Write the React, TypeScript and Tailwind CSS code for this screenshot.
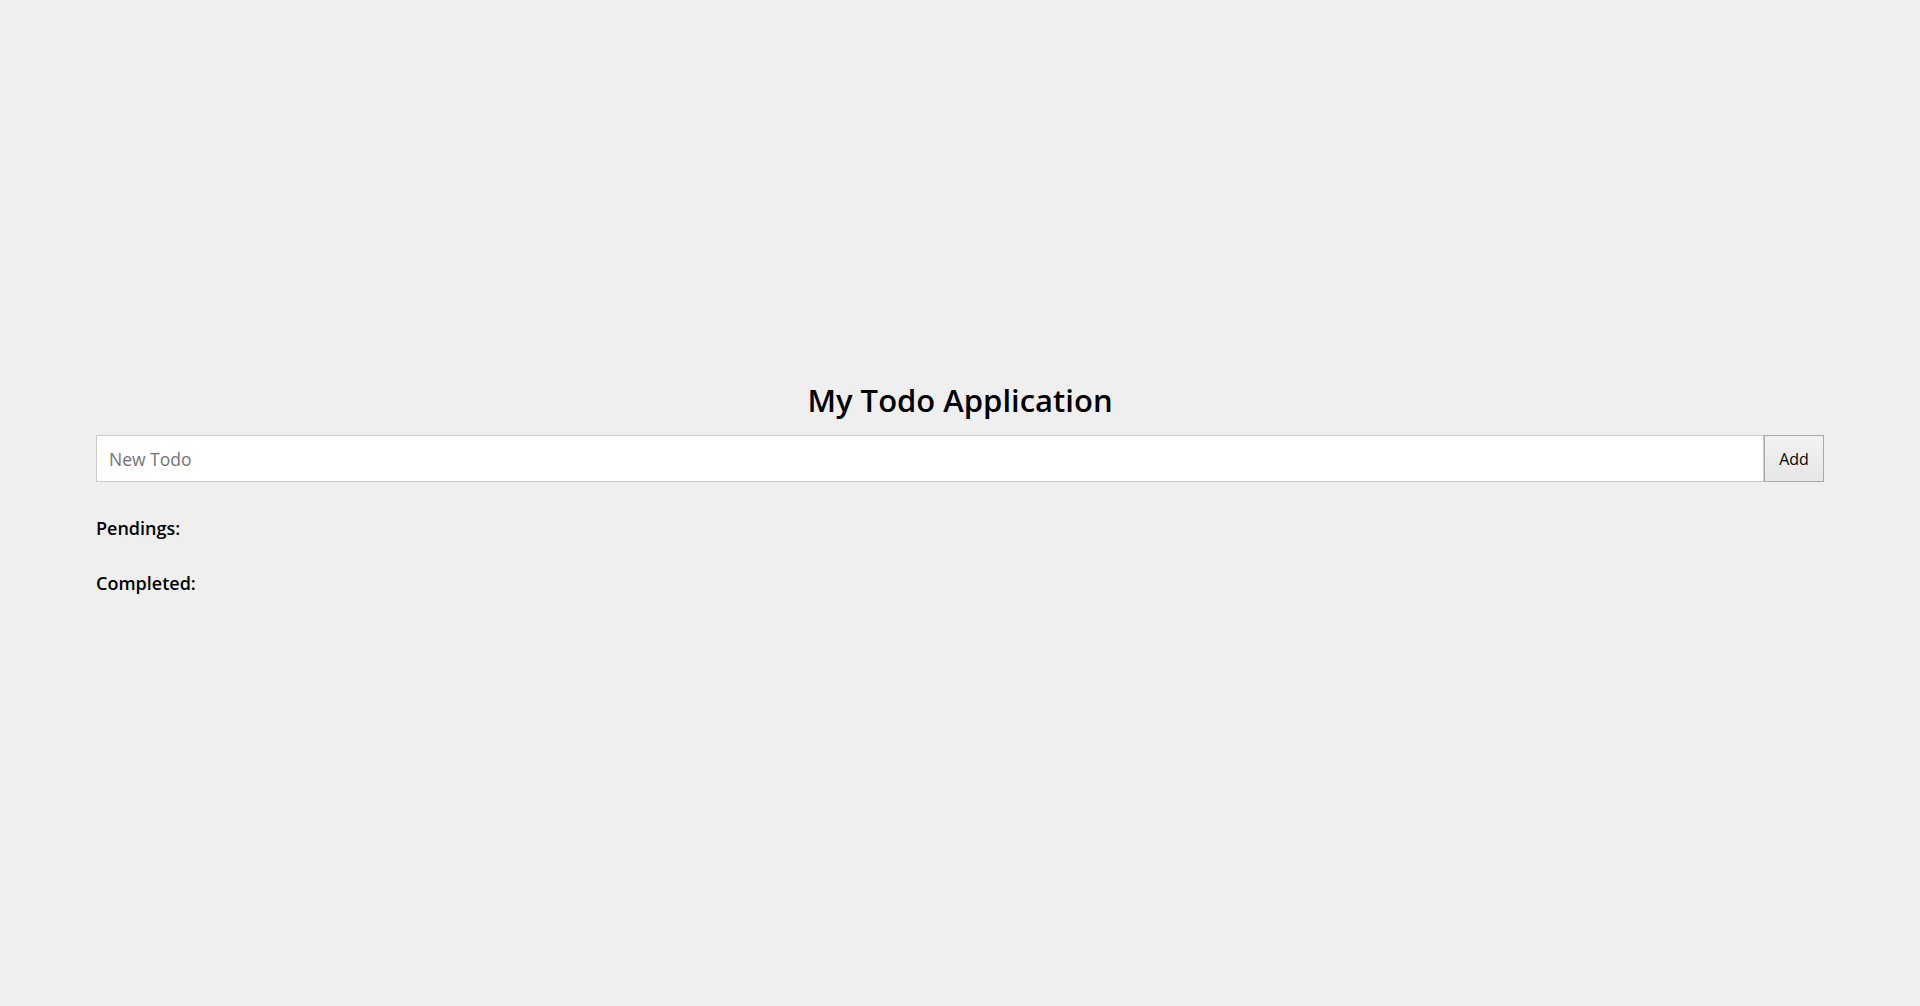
import React from "react";

export default function App() {
  return (
    <div className="min-h-[1006px] w-full bg-[#efefef] font-['Open_Sans',sans-serif] text-black">
      <div className="mx-auto w-[90%] pt-[382px]">
        <h1 className="text-center text-[31px] font-semibold leading-[36px]">My Todo Application</h1>
        <div className="mt-[17px] flex h-[47px]">
          <input
            type="text"
            placeholder="New Todo"
            className="h-full flex-1 border border-[#cccccc] bg-white px-[12px] text-[17.5px] text-black outline-none placeholder:text-[#757575]"
          />
          <button className="h-full w-[60px] border border-[#a9a9a9] bg-gradient-to-b from-[#f2f2f2] to-[#e6e6e6] text-[16px] text-black">
            Add
          </button>
        </div>
        <div className="mt-[34px] text-[18px] font-semibold leading-[24px]">Pendings:</div>
        <div className="mt-[31px] text-[18px] font-semibold leading-[24px]">Completed:</div>
      </div>
    </div>
  );
}
